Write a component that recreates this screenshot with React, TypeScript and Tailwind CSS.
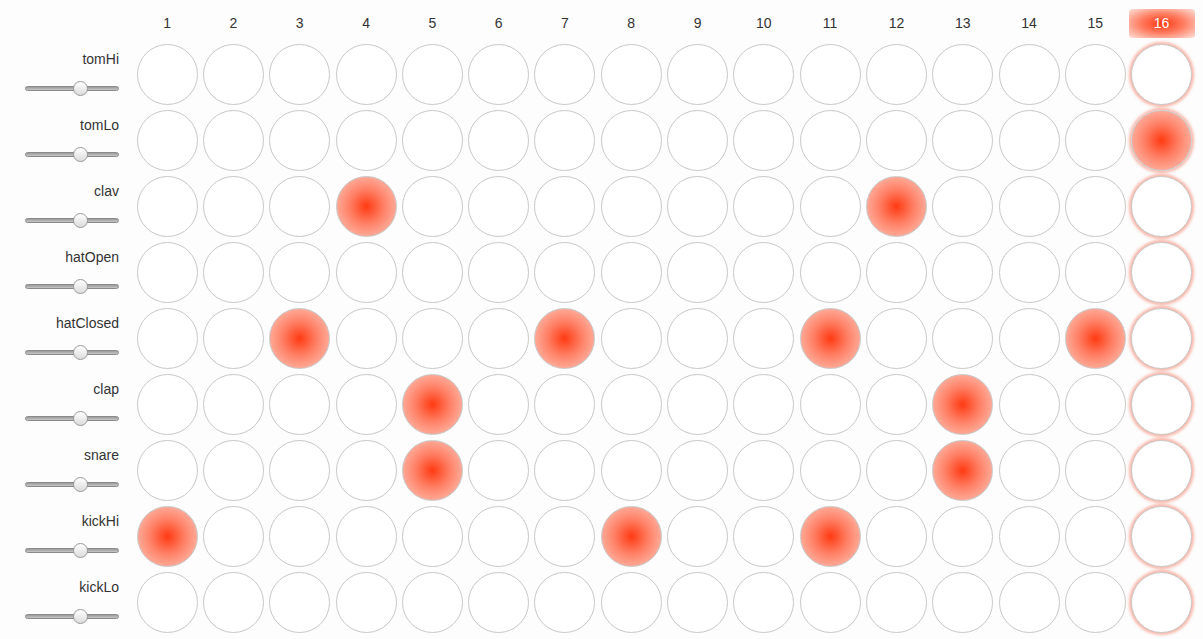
const tracks = [
  { name: "tomHi", on: [] as number[] },
  { name: "tomLo", on: [16] },
  { name: "clav", on: [4, 12] },
  { name: "hatOpen", on: [] },
  { name: "hatClosed", on: [3, 7, 11, 15] },
  { name: "clap", on: [5, 13] },
  { name: "snare", on: [5, 13] },
  { name: "kickHi", on: [1, 8, 11] },
  { name: "kickLo", on: [] },
];

const steps = Array.from({ length: 16 }, (_, i) => i + 1);
const current = 16;

function Slider() {
  return (
    <div className="relative w-[94px] h-[14px] flex items-center">
      <div className="w-full h-[5px] rounded-full border border-[#8a8a8a] bg-gradient-to-b from-[#9a9a9a] to-[#c8c8c8]" />
      <div className="absolute left-[48px] top-0 w-[15px] h-[15px] rounded-full border border-[#9a9a9a] bg-gradient-to-b from-white to-[#dcdcdc]" />
    </div>
  );
}

function Pad({ on, playing }: { on: boolean; playing: boolean }) {
  return (
    <div className="flex items-center justify-center h-[66px]">
      <div
        className={`w-[61px] h-[61px] rounded-full border border-[#c8c8c8] ${
          on
            ? "bg-[radial-gradient(circle,#ff3a12_0%,#ff7e63_40%,#fdd0c6_100%)]"
            : "bg-white"
        } ${playing ? "shadow-[0_0_3px_2px_rgba(245,120,95,0.55)]" : ""}`}
      />
    </div>
  );
}

export default function App() {
  return (
    <div className="w-[1203px] h-[639px] bg-[#fdfdfd] flex font-['Liberation_Sans',Arial,sans-serif] text-[#333] text-[14px]">
      <div className="w-[134px] flex flex-col pt-[41px]">
        {tracks.map((t) => (
          <div key={t.name} className="h-[66px] flex flex-col items-end pr-[15px] pt-[9px]">
            <div className="leading-[18px]">{t.name}</div>
            <div className="mt-[13px]">
              <Slider />
            </div>
          </div>
        ))}
      </div>
      <div className="flex flex-col">
        <div className="grid grid-cols-[repeat(16,66.3px)] h-[41px]">
          {steps.map((s) => (
            <div key={s} className="flex items-start justify-center pt-[9px]">
              {s === current ? (
                <div className="w-[66px] h-[29px] rounded-[3px] flex items-center justify-center text-white bg-[radial-gradient(ellipse_at_center,#ff3a12_0%,#ff7a5e_45%,#ffe3dc_100%)]">
                  {s}
                </div>
              ) : (
                <div className="h-[29px] flex items-center">{s}</div>
              )}
            </div>
          ))}
        </div>
        {tracks.map((t) => (
          <div key={t.name} className="grid grid-cols-[repeat(16,66.3px)]">
            {steps.map((s) => (
              <Pad key={s} on={t.on.includes(s)} playing={s === current} />
            ))}
          </div>
        ))}
      </div>
    </div>
  );
}
